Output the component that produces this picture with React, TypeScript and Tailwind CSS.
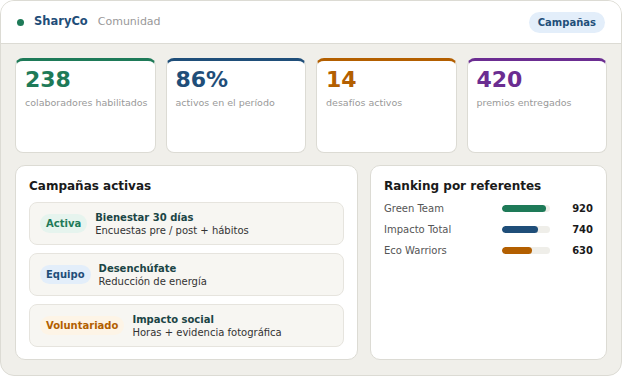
import React from 'react';

interface Stat {
    value: string;
    label: string;
    color: string;
    border: string;
}

const stats: Stat[] = [
    { value: '238', label: 'colaboradores habilitados', color: 'text-[#1e7a58]', border: 'border-t-[#1e7a58]' },
    { value: '86%', label: 'activos en el período', color: 'text-[#1f4e79]', border: 'border-t-[#1f4e79]' },
    { value: '14', label: 'desafíos activos', color: 'text-[#b35f00]', border: 'border-t-[#b35f00]' },
    { value: '420', label: 'premios entregados', color: 'text-[#6b2d91]', border: 'border-t-[#6b2d91]' },
];

const campaigns = [
    { badge: 'Activa', badgeClass: 'bg-[#e6f4ee] text-[#1e7a58]', title: 'Bienestar 30 días', desc: 'Encuestas pre / post + hábitos' },
    { badge: 'Equipo', badgeClass: 'bg-[#e3eefa] text-[#1f4e79]', title: 'Desenchúfate', desc: 'Reducción de energía' },
    { badge: 'Voluntariado', badgeClass: 'bg-[#fdf4e6] text-[#b35f00]', title: 'Impacto social', desc: 'Horas + evidencia fotográfica' },
];

const ranking = [
    { name: 'Green Team', points: 920, bar: 'bg-[#1e7a58]' },
    { name: 'Impacto Total', points: 740, bar: 'bg-[#1f4e79]' },
    { name: 'Eco Warriors', points: 630, bar: 'bg-[#b35f00]' },
];

export default function App() {
    return (
        <div className="w-[622px] h-[376px] bg-white" style={{ fontFamily: '"DejaVu Sans", sans-serif' }}>
            <div className="h-full flex flex-col bg-[#f0efea] border border-[#dcdbd4] rounded-[14px] overflow-hidden">
                {/* Header */}
                <div className="h-[43px] shrink-0 bg-white border-b border-[#dcdbd4] flex items-center justify-between px-4">
                    <div className="flex items-center">
                        <span className="w-[7px] h-[7px] rounded-full bg-[#1e7a58]" />
                        <span className="ml-[10px] text-[11.5px] font-bold text-[#1f4e79]">SharyCo</span>
                        <span className="ml-[10px] text-[11px] text-[#999]">Comunidad</span>
                    </div>
                    <button className="h-[21px] px-[9px] rounded-full bg-[#e3eefa] text-[10px] font-bold text-[#1f4e79]">
                        Campañas
                    </button>
                </div>

                <div className="flex-1 px-[14px] pt-[14px] pb-[15px] flex flex-col gap-[12px]">
                    {/* Stats */}
                    <div className="grid grid-cols-4 gap-[10px]">
                        {stats.map(s => (
                            <div key={s.value} className={`h-[95px] bg-white rounded-lg border border-[#dcdbd4] border-t-[3px] ${s.border} px-[9px] pt-[8px]`}>
                                <div className={`text-[22px] leading-[22px] font-bold ${s.color}`}>{s.value}</div>
                                <div className="mt-[6px] text-[9.5px] leading-[12px] text-[#999] whitespace-nowrap">{s.label}</div>
                            </div>
                        ))}
                    </div>

                    {/* Panels */}
                    <div className="flex-1 grid grid-cols-[343px_1fr] gap-[12px]">
                        <div className="bg-white rounded-[10px] border border-[#dcdbd4] px-[13px] pt-[13px]">
                            <h2 className="text-[12px] leading-[15px] font-bold text-[#1a1a1a] mb-[8px]">Campañas activas</h2>
                            <div className="flex flex-col gap-[8px]">
                                {campaigns.map(c => (
                                    <div key={c.title} className="h-[43px] flex items-center bg-[#f7f6f2] border border-[#e6e4de] rounded-lg px-[10px]">
                                        <span className={`h-[19px] px-[6px] flex items-center rounded-full text-[10px] font-bold ${c.badgeClass}`}>{c.badge}</span>
                                        <div className="ml-[8px] leading-[13px]">
                                            <div className="text-[10px] font-bold text-[#1b4545]">{c.title}</div>
                                            <div className="text-[10px] text-[#333]">{c.desc}</div>
                                        </div>
                                    </div>
                                ))}
                            </div>
                        </div>

                        <div className="bg-white rounded-[10px] border border-[#dcdbd4] px-[13px] pt-[13px]">
                            <h2 className="text-[12px] leading-[15px] font-bold text-[#1a1a1a] mb-[4px]">Ranking por referentes</h2>
                            {ranking.map(r => (
                                <div key={r.name} className="h-[21px] grid grid-cols-[118px_48px_1fr] items-center">
                                    <span className="text-[10px] text-[#555]">{r.name}</span>
                                    <div className="h-[7px] rounded-full bg-[#efeee9] overflow-hidden">
                                        <div className={`h-full rounded-full ${r.bar}`} style={{ width: `${r.points / 10}%` }} />
                                    </div>
                                    <span className="text-right text-[10px] font-bold text-[#1a1a1a]">{r.points}</span>
                                </div>
                            ))}
                        </div>
                    </div>
                </div>
            </div>
        </div>
    );
}
